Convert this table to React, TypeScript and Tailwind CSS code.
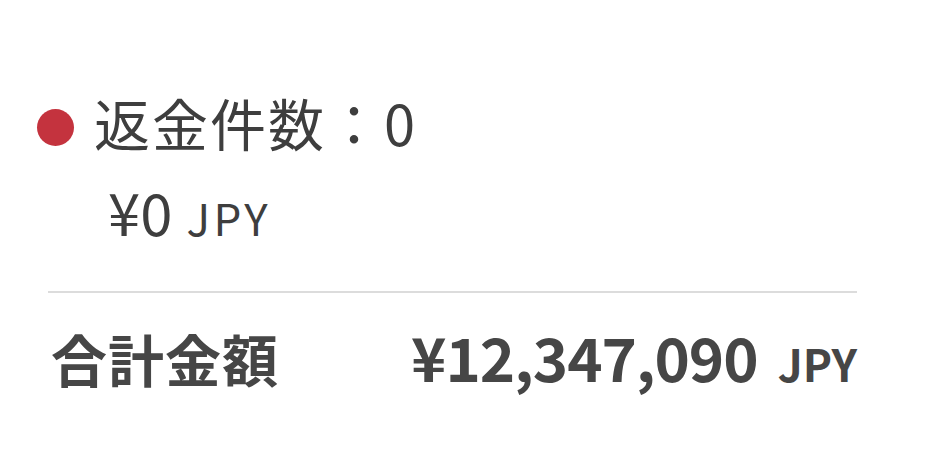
export default function App() {
  return (
    <div className="w-[932px] h-[454px] bg-white overflow-hidden font-['Noto_Sans_CJK_JP',sans-serif] text-[#3e3e3e]">
      <div className="pt-[90px]">
        <div className="flex items-center h-[64px]">
          <span className="ml-[37px] mt-[10px] w-[37px] h-[37px] rounded-full bg-[#c4333e]" />
          <span className="ml-[20px] text-[56px] leading-[64px] tracking-[2px]">返金件数：0</span>
        </div>
        <div className="flex items-baseline pl-[108px] mt-[22px] h-[70px]">
          <span className="text-[58px] leading-[70px]">¥0</span>
          <span className="ml-[14px] text-[44px] leading-[70px] tracking-[0.08em]">JPY</span>
        </div>
      </div>
      <div className="ml-[48px] mt-[45px] w-[809px] h-[2px] bg-[#dcdcdc]" />
      <div className="flex items-baseline justify-between ml-[51px] w-[806px] mt-[31px] text-[#464646]">
        <span className="text-[56px] leading-[64px] font-bold tracking-[1px]">合計金額</span>
        <span className="flex items-baseline font-bold">
          <span className="text-[60px] leading-[64px] tracking-[-1px]">¥12,347,090</span>
          <span className="ml-[20px] text-[44px] leading-[64px]">JPY</span>
        </span>
      </div>
    </div>
  );
}
